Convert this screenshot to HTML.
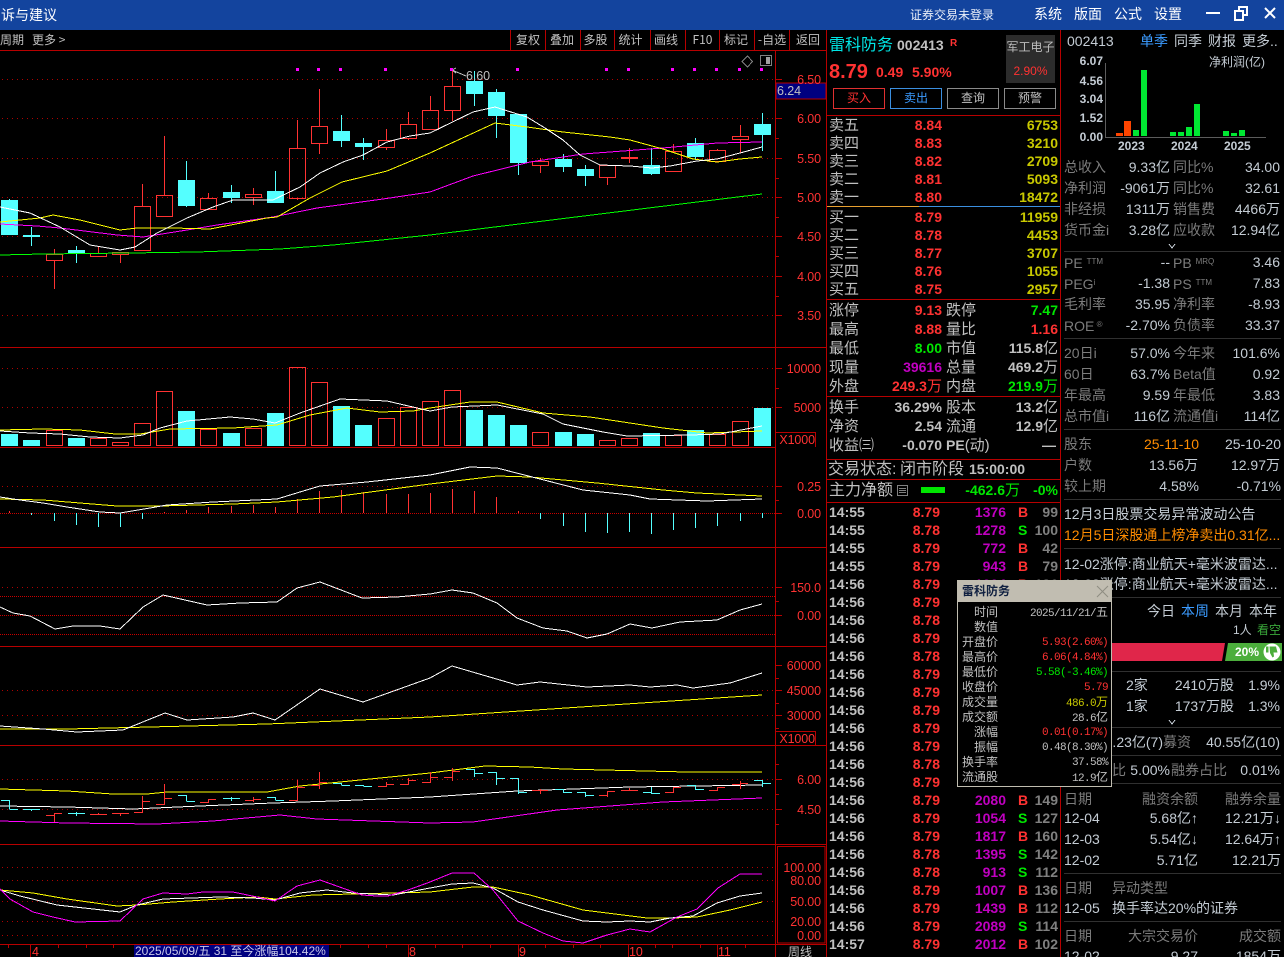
<!DOCTYPE html>
<html lang="zh"><head><meta charset="utf-8"><title>雷科防务</title>
<style>
html,body{margin:0;padding:0;background:#000;width:1284px;height:957px;overflow:hidden}
body{position:relative;font-family:"Liberation Sans","WenQuanYi Zen Hei","Noto Sans CJK SC",sans-serif;color:#c0c0c0}
.a,.r span{position:absolute;white-space:pre}
.a{height:18px;line-height:18px}
.r{position:absolute;left:0;width:1284px;height:18px;line-height:18px}
.g{color:#c0c0c0}.red{color:#ff3232}.gr{color:#00e600}.cy{color:#00e6e6}.yl{color:#c8c800}.mg{color:#c000c0}.bl{color:#3b9bff}.or{color:#ff8c00}.dk{color:#808080}
.m{font-family:"Liberation Sans","WenQuanYi Zen Hei","Noto Sans CJK SC",sans-serif;font-size:15px;color:#c0c0c0}
.r .m{top:1px}
.n{font-family:"Liberation Sans","WenQuanYi Zen Hei",sans-serif;font-weight:bold;font-size:14px}
.r .n{top:0}
.n s{text-decoration:none;font-weight:normal;font-size:15px}
.m1{left:829px}.m2{right:342px}.m3{left:946px}.m4{right:226px}
.t1{left:829px;color:#c0c0c0}.t2{right:344px;color:#ff3232}.t3{right:278px;color:#c000c0}.t4{left:1018px}.t5{right:226px;color:#808080}
.x{font-family:"Liberation Sans","Noto Sans CJK SC",sans-serif;font-size:14px;color:#c4ccd4}
.x .l,.l{color:#7c7c7c}
.c1{left:1064px}.c2{right:114px}.c3{left:1173px}.c4{right:4px}
.ax{font-family:"Liberation Sans","WenQuanYi Zen Hei",sans-serif;font-size:12.5px;letter-spacing:-.1px;color:#ff3232;position:absolute;right:463px;height:16px;line-height:16px;white-space:pre}
.tb{position:absolute;top:31px;height:17px;line-height:17px;font-size:12px;color:#c0c0c0;font-family:"WenQuanYi Zen Hei","Noto Sans CJK SC",sans-serif;white-space:pre;text-align:center}
.p{position:absolute;left:0;width:155px;height:15px;line-height:15px}
.p i{font-style:normal;position:absolute;right:115px;top:-1px;font-size:12px;color:#c0c0c0;font-family:"WenQuanYi Zen Hei","Noto Sans CJK SC",sans-serif}
.p b{font-weight:normal;position:absolute;right:5px;top:1px;font-family:"Liberation Mono","WenQuanYi Zen Hei",monospace;font-size:11px;letter-spacing:-.6px;white-space:pre}
.p b s{text-decoration:none;font-size:12px;letter-spacing:0}
</style></head><body>

<svg width="1284" height="957" style="position:absolute;left:0;top:0" shape-rendering="crispEdges" fill="none">
<rect x="0" y="0" width="1284" height="30" fill="#13449e"/>
<!-- frame lines -->
<path stroke="#b80000" d="M0 50.5H827M0 347.5H827M0 447.5H775M0 547.5H827M0 646.5H827M0 745.5H827M0 844.5H827M0 944.5H827M775.5 50V957M826.5 30V957M1060.5 30V957M510.5 30V50M545.5 30V50M580.5 30V50M614.5 30V50M650.5 30V50M685.5 30V50M719.5 30V50M754.5 30V50M789.5 30V50"/>
<path stroke="#b80000" d="M776 432.5H815.5V447M776 731.5H815.5V745M777.5 846.5H825V943H777.5Z"/>
<!-- dotted -->
<path stroke="#b00000" stroke-dasharray="1 4" d="M2 79.5H775M2 118.5H775M2 158.5H775M2 197.5H775M2 236.5H775M2 276.5H775M2 315.5H775M2 368.5H775M2 407.5H775M2 486.5H775M2 587.5H775M2 690.5H775M2 715.5H775M2 779.5H775M2 809.5H775M2 867.5H775M2 880.5H775M2 901.5H775M2 921.5H775M2 935.5H775"/>
<path stroke="#c80000" stroke-dasharray="1 1" d="M0 513.5H775M0 596.5H775M0 615.5H775M0 634.5H775"/>
<!-- ticks -->
<path stroke="#b80000" d="M776 79.5H782M776 118.5H782M776 158.5H782M776 197.5H782M776 236.5H782M776 276.5H782M776 315.5H782M776 138.5H779M776 178.5H779M776 217.5H779M776 256.5H779M776 296.5H779M776 368.5H782M776 407.5H782M776 388.5H779M776 486.5H782M776 513.5H782M776 500.5H779M776 587.5H782M776 615.5H782M776 601.5H779M776 665.5H782M776 690.5H782M776 715.5H782M776 678.5H779M776 703.5H779M776 728.5H779M776 779.5H782M776 809.5H782M776 794.5H779M776 824.5H779M776 764.5H779M8.5 945V948M58.5 945V948M86.5 945V948M113.5 945V948M30.5 945V957M134.5 945V957M340.5 945V948M368.5 945V948M386.5 945V948M408.5 945V957M435.5 945V948M462.5 945V948M490.5 945V948M518.5 945V957M545.5 945V948M573.5 945V948M600.5 945V948M628.5 945V957M655.5 945V948M672.5 945V948M700.5 945V948M717.5 945V957M745.5 945V948"/>
<!-- candles wicks -->
<path stroke="#ff3232" d="M54.5 249V254M54.5 260V289M98.5 246V253M120.5 255V263M142.5 184V206M164.5 136V195M208.5 193V198M253.5 188V194M253.5 197V205M297.5 120V148M297.5 198V200M319.5 89V126M319.5 143V154M386.5 129V140M386.5 147V150M408.5 112V124M408.5 138V140M430.5 96V110M452.5 68V86M452.5 110V121M540.5 158V161M540.5 165V173M607.5 177V185M629.5 148V163M673.5 144V151M717.5 149V150M740.5 125V136M740.5 139V153"/>
<path stroke="#54ffff" d="M9.5 199V235M31.5 227V246M76.5 246V263M186.5 161V207M231.5 185V203M275.5 171V203M341.5 115V147M363.5 138V160M474.5 71V106M496.5 89V138M518.5 114V175M563.5 154V172M585.5 165V186M651.5 148V175M695.5 138V159M762.5 113V151"/>
<!-- candle bodies -->
<g fill="#54ffff"><rect x="1" y="200" width="17" height="35"/><rect x="23" y="235" width="17" height="2"/><rect x="68" y="250" width="17" height="3"/><rect x="178" y="180" width="17" height="26"/><rect x="223" y="192" width="17" height="6"/><rect x="267" y="191" width="17" height="12"/><rect x="333" y="131" width="17" height="10"/><rect x="355" y="143" width="17" height="4"/><rect x="466" y="81" width="17" height="13"/><rect x="488" y="92" width="17" height="24"/><rect x="510" y="114" width="17" height="49"/><rect x="555" y="159" width="17" height="8"/><rect x="577" y="169" width="17" height="7"/><rect x="643" y="165" width="17" height="9"/><rect x="687" y="143" width="17" height="14"/><rect x="754" y="124" width="17" height="11"/></g>
<g stroke="#ff3232"><rect x="46.500" y="254.500" width="16" height="6"/><rect x="90.500" y="253.500" width="16" height="3"/><rect x="112.500" y="252.500" width="16" height="2"/><rect x="134.500" y="206.500" width="16" height="44"/><rect x="156.500" y="195.500" width="16" height="21"/><rect x="200.500" y="198.500" width="16" height="11"/><rect x="245.500" y="194.500" width="16" height="3"/><rect x="289.500" y="148.500" width="16" height="50"/><rect x="311.500" y="126.500" width="16" height="17"/><rect x="378.500" y="140.500" width="16" height="7"/><rect x="400.500" y="124.500" width="16" height="14"/><rect x="422.500" y="110.500" width="16" height="19"/><rect x="444.500" y="86.500" width="16" height="24"/><rect x="532.500" y="161.500" width="16" height="4"/><rect x="599.500" y="165.500" width="16" height="12"/><rect x="621.500" y="157.500" width="16" height="1"/><rect x="665.500" y="151.500" width="16" height="20"/><rect x="709.500" y="150.500" width="16" height="11"/><rect x="732.500" y="136.500" width="16" height="3"/></g>
<!-- main MAs -->
<polyline stroke="#00ff00" points="0,255 43,254 130,253 197,252 280,249 333,245 430,235 762,194"/>
<polyline stroke="#ff00ff" points="0,224 37,226 60,228 117,235 143,237 187,230 217,225 273,217 317,208 383,199 430,192 473,176 530,162 583,154 663,148 717,143 762,142"/>
<polyline stroke="#ffff00" points="0,222 40,218 53,215 80,220 120,230 137,228 173,228 210,229 267,218 277,217 310,198 342,182 387,171 430,153 495,123 527,127 563,132 610,137 630,140 663,149 693,159 717,162 740,159 762,157"/>
<polyline stroke="#ffffff" points="0,207 30,213 60,227 90,245 120,250 135,247 157,233 187,218 213,207 233,200 273,200 300,187 320,173 343,162 363,155 387,142 410,136 430,133 473,112 495,107 527,117 545,128 563,140 580,155 600,165 630,166 652,168 670,166 697,161 717,159 740,153 762,147"/>
<path stroke="#c0c0c0" d="M452 70L466 76M452 70L456 68M452 70L456 73"/>
<!-- magenta dots -->
<g fill="#ff00ff"><rect x="296" y="68" width="3" height="3"/><rect x="317" y="68" width="3" height="3"/><rect x="339" y="68" width="3" height="3"/><rect x="384" y="68" width="3" height="3"/><rect x="450" y="68" width="3" height="3"/><rect x="516" y="68" width="3" height="3"/><rect x="605" y="68" width="3" height="3"/><rect x="627" y="68" width="3" height="3"/><rect x="671" y="68" width="3" height="3"/><rect x="693" y="68" width="3" height="3"/><rect x="715" y="68" width="3" height="3"/><rect x="738" y="68" width="3" height="3"/><rect x="760" y="68" width="3" height="3"/></g>
<path stroke="#808080" d="M747.500 56L752.500 61.500L747.500 67L742 61.500Z"/>
<rect x="760.500" y="55.500" width="11" height="10" stroke="#808080"/><rect x="766" y="57" width="4" height="7" fill="#a0a0a0"/>
<!-- volume -->
<g fill="#54ffff"><rect x="1" y="434" width="17" height="12"/><rect x="23" y="440" width="17" height="6"/><rect x="68" y="438" width="17" height="8"/><rect x="178" y="411" width="17" height="35"/><rect x="223" y="433" width="17" height="13"/><rect x="267" y="413" width="17" height="33"/><rect x="333" y="406" width="17" height="40"/><rect x="355" y="425" width="17" height="21"/><rect x="466" y="410" width="17" height="36"/><rect x="488" y="415" width="17" height="31"/><rect x="510" y="425" width="17" height="21"/><rect x="555" y="432" width="17" height="14"/><rect x="577" y="434" width="17" height="12"/><rect x="643" y="433" width="17" height="13"/><rect x="687" y="430" width="17" height="16"/><rect x="754" y="408" width="17" height="38"/></g>
<g stroke="#ff3232"><rect x="46.500" y="430.500" width="16" height="15"/><rect x="90.500" y="438.500" width="16" height="7"/><rect x="112.500" y="442.500" width="16" height="3"/><rect x="134.500" y="423.500" width="16" height="22"/><rect x="156.500" y="391.500" width="16" height="54"/><rect x="200.500" y="429.500" width="16" height="16"/><rect x="245.500" y="428.500" width="16" height="17"/><rect x="289.500" y="367.500" width="16" height="78"/><rect x="311.500" y="382.500" width="16" height="63"/><rect x="378.500" y="418.500" width="16" height="27"/><rect x="400.500" y="407.500" width="16" height="38"/><rect x="422.500" y="401.500" width="16" height="44"/><rect x="444.500" y="390.500" width="16" height="55"/><rect x="532.500" y="432.500" width="16" height="13"/><rect x="599.500" y="440.500" width="16" height="5"/><rect x="621.500" y="438.500" width="16" height="7"/><rect x="665.500" y="435.500" width="16" height="10"/><rect x="709.500" y="434.500" width="16" height="11"/><rect x="732.500" y="421.500" width="16" height="24"/></g>
<polyline stroke="#ffff00" points="0,430 43,429 80,430 115,434 140,434 170,429 233,428 277,425 310,415 347,408 380,412 413,411 430,408 470,402 497,402 543,413 590,417 663,428 707,433 762,431"/>
<polyline stroke="#ffffff" points="0,431 30,433 60,434 90,437 120,438 143,435 160,428 187,421 230,417 253,419 275,423 300,413 340,399 387,401 430,411 452,407 497,405 543,414 563,424 603,432 627,436 690,435 720,434 762,426"/>
<!-- MACD -->
<path stroke="#ff3232" d="M9.500 511V513M164.500 512V513M186.500 510V513M208.500 507V513M231.500 506V513M253.500 505V513M275.500 507V513M297.500 499V513M319.500 491V513M341.500 490V513M363.500 492V513M386.500 494V513M408.500 494V513M430.500 493V513M452.500 489V513M474.500 491V513M496.500 497V513M518.500 511V513"/>
<path stroke="#54ffff" d="M31.500 513V515M54.500 513V521M76.500 513V525M98.500 513V527M120.500 513V527M142.500 513V519M540.500 513V519M563.500 513V526M585.500 513V532M607.500 513V533M629.500 513V532M651.500 513V534M673.500 513V530M695.500 513V528M717.500 513V526M740.500 513V521M762.500 513V518"/>
<polyline stroke="#ffff00" points="0,499 43,500 117,506 160,506 233,504 277,502 333,497 430,484 497,476 530,477 597,483 663,490 697,493 762,496"/>
<polyline stroke="#ffffff" points="0,497 20,500 43,503 67,507 100,512 120,513 150,508 167,505 213,502 277,499 300,492 320,486 367,482 430,475 470,467 497,468 540,479 583,490 630,495 650,499 707,501 762,499"/>
<!-- CCI -->
<polyline stroke="#ffffff" points="0,607 13,613 30,616 55,629 73,626 100,626 120,629 143,607 163,595 207,605 240,603 277,602 297,588 320,582 362,598 397,597 430,594 452,590 473,593 497,603 517,618 543,628 567,631 587,638 607,634 630,624 652,628 680,622 717,620 740,610 762,604"/>
<!-- OBV-like -->
<polyline stroke="#ffff00" points="0,729 67,729 150,727 267,724 430,717 762,695"/>
<polyline stroke="#ffffff" points="0,726 43,729 77,732 123,730 165,713 187,720 233,717 253,713 275,720 320,689 363,702 430,678 452,666 517,685 540,682 587,687 630,685 650,687 677,685 693,688 730,683 762,673"/>
<!-- BOLL + OHLC -->
<polyline stroke="#ffff00" points="0,789 67,791 113,794 147,794 167,792 267,792 300,786 430,773 485,766 530,767 563,769 687,772 762,772"/>
<polyline stroke="#ffffff" points="0,806 67,807 133,809 200,806 273,803 333,801 430,797 517,791 630,787 762,785"/>
<polyline stroke="#ff00ff" points="0,821 67,823 157,824 213,821 280,815 317,819 430,823 473,822 557,810 663,802 762,798"/>
<path stroke="#54ffff" d="M1 800.500H9.500V809M9.500 809.500H18M23 809.500H40M31.500 809V811M68 813.500H85M76.500 812V816M178 795.500H186.500V801M186.500 801.500H195M223 798.500H240M231.500 797V801M267 797.500H275.500V800M275.500 800.500H284M333 783.500H341.500V785M341.500 785.500H350M355 785.500H363.500V786M363.500 786.500H372M466 769.500H474.500V777M474.500 773.500H483M488 772.500H496.500V785M496.500 778.500H505M510 778.500H518.500V794M518.500 792.500H527M555 789.500H563.500V793M563.500 792.500H572M577 792.500H585.500V797M585.500 795.500H594M643 792.500H651.500V794M651.500 793.500H660M651.500 787V792M687 785.500H695.500V790M695.500 789.500H704M754 780.500H762.500V787M762.500 783.500H771"/>
<path stroke="#ff3232" d="M46 815.500H54.500V822M54.500 813.500H62M54.500 813V815M90 814.500H107M98.500 813V815M112 813.500H129M120.500 813V816M134 812.500H142.500V796M142.500 801.500H150M156 804.500H164.500V784M164.500 798.500H172M200 802.500H208.500V799M208.500 799.500H216M245 800.500H253.500V797M253.500 799.500H261M253.500 800V802M289 800.500H297.500V780M297.500 787.500H305M311 785.500H319.500V772M319.500 782.500H327M319.500 785V789M378 786.500H386.500V782M386.500 784.500H394M386.500 786V787M400 784.500H408.500V778M408.500 780.500H416M422 782.500H430.500V772M430.500 777.500H438M444 777.500H452.500V768M452.500 771.500H460M452.500 777V781M532 790.500H548M540.500 789V794M599 795.500H607.500V791M607.500 791.500H615M607.500 795V797M621 790.500H638M629.500 788V791M665 792.500H673.500V787M673.500 787.500H681M709 790.500H717.500V787M717.500 787.500H725M732 784.500H740.500V781M740.500 783.500H748M740.500 784V789"/>
<!-- KDJ -->
<polyline stroke="#ffff00" points="0,890 33,893 67,899 117,906 137,905 173,902 220,899 257,897 275,899 313,895 353,894 430,892 473,887 493,887 530,895 583,910 647,918 673,918 697,917 730,910 762,902"/>
<polyline stroke="#ffffff" points="0,890 20,896 57,905 93,909 120,912 137,905 163,899 220,897 253,898 275,900 300,893 327,890 353,893 393,895 430,888 452,884 473,883 493,888 518,902 543,910 583,921 607,922 630,921 650,922 670,918 693,916 717,903 740,896 762,893"/>
<polyline stroke="#ff00ff" points="0,889 10,899 33,912 53,917 75,922 120,921 143,899 163,893 187,894 203,892 233,892 257,897 275,901 297,886 320,880 362,895 377,896 388,896 408,890 430,882 452,873 474,873 493,890 518,921 543,933 563,941 583,943 607,935 630,929 650,932 677,917 697,909 718,888 740,874 762,874"/>
<!-- middle col lines -->
<path stroke="#b80000" d="M827 115.500H1060M827 299.500H1060M827 396.500H1060M827 459.500H1060M827 479.500H1060M827 502.500H1060"/>
<path stroke="#e8a030" d="M827 206.500H919"/><path stroke="#3b8fe0" d="M919 206.500H1060"/>
<rect x="1006" y="35" width="49" height="48" fill="#2c2c2c"/>
<rect x="833.500" y="88.500" width="51" height="20" stroke="#e03030"/><rect x="890.500" y="88.500" width="51" height="20" stroke="#3b8fe0"/><rect x="947.500" y="88.500" width="51" height="20" stroke="#8a8a8a"/><rect x="1004.500" y="88.500" width="51" height="20" stroke="#8a8a8a"/>
<rect x="921" y="487" width="24" height="6" fill="#00e600"/>
<rect x="897.500" y="485.500" width="10" height="10" stroke="#808080"/><path stroke="#808080" d="M899 488.500H906M899 490.500H906M899 492.500H906"/>
<!-- right col lines -->
<path stroke="#303030" d="M1064 251.500H1281M1064 338.500H1281M1064 429.500H1281M1064 499.500H1281M1064 548.500H1281M1064 597.500H1281M1064 671.500H1281M1064 727.500H1281M1064 755.500H1281M1064 783.500H1281M1064 873.500H1281M1064 921.500H1281"/>
<path stroke="#5c5c5c" d="M1105.500 63V137.500H1266"/>
<path stroke="#c4ccd4" d="M1169 244L1172 248L1175 244M1169 720L1172 724L1175 720"/>
<g fill="#ff4500"><rect x="1116" y="133" width="7" height="3"/><rect x="1124" y="121" width="7" height="15"/></g>
<g fill="#00e832"><rect x="1133" y="130" width="6" height="6"/><rect x="1141" y="70" width="6" height="66"/><rect x="1170" y="132" width="6" height="4"/><rect x="1178" y="132" width="6" height="4"/><rect x="1186" y="127" width="6" height="9"/><rect x="1194" y="104" width="6" height="32"/><rect x="1223" y="131" width="6" height="5"/><rect x="1231" y="133" width="6" height="3"/><rect x="1239" y="130" width="6" height="6"/></g>
<polygon shape-rendering="auto" fill="#e0264a" points="1112,643 1225,643 1222,661 1112,661"/>
<polygon shape-rendering="auto" fill="#4cae3c" points="1228,643 1282,643 1282,661 1225,661"/>
<circle shape-rendering="auto" cx="1272" cy="652" r="8.500" fill="#fff"/>
<path shape-rendering="auto" fill="#4cae3c" d="M1266 646.500h2.500v6h-2.500zM1269.500 646.500h6.500l1.500 6h-4l.5 4-1.500 1-2.500-4.500z"/>
<!-- window btns -->
<path stroke="#fff" stroke-width="2" d="M1206 13H1220"/>
<path stroke="#fff" stroke-width="2" d="M1235 11H1243V20H1235ZM1239 10V7H1247V15H1244"/>
<path shape-rendering="auto" stroke="#fff" stroke-width="2" d="M1265 8L1275 18M1275 8L1265 18"/>
<rect x="776" y="83" width="50" height="16" fill="#000080" stroke="#b80000"/>
<rect x="134" y="945" width="195" height="12" fill="#000080"/>
</svg>

<!-- top bar -->
<div class="a" style="left:1px;top:6px;font-size:14px;color:#fff">诉与建议</div>
<div class="a" style="left:910px;top:6px;font-size:12px;color:#e8eef8">证券交易未登录</div>
<div class="a" style="left:1034px;top:5px;font-size:14px;color:#fff">系统</div>
<div class="a" style="left:1074px;top:5px;font-size:14px;color:#fff">版面</div>
<div class="a" style="left:1114px;top:5px;font-size:14px;color:#fff">公式</div>
<div class="a" style="left:1154px;top:5px;font-size:14px;color:#fff">设置</div>

<!-- toolbar -->
<div class="tb" style="left:0">周期</div><div class="tb" style="left:32px">更多 &gt;</div>
<div class="tb" style="left:511px;width:34px">复权</div><div class="tb" style="left:545px;width:34px">叠加</div><div class="tb" style="left:579px;width:33px">多股</div><div class="tb" style="left:613px;width:35px">统计</div><div class="tb" style="left:649px;width:34px">画线</div><div class="tb" style="left:686px;width:33px">F10</div><div class="tb" style="left:719px;width:34px">标记</div><div class="tb" style="left:755px;width:34px">-自选</div><div class="tb" style="left:790px;width:36px">返回</div>

<!-- axis labels -->
<div class="ax" style="top:72px">6.50</div><div class="ax" style="top:111px">6.00</div><div class="ax" style="top:151px">5.50</div><div class="ax" style="top:190px">5.00</div><div class="ax" style="top:229px">4.50</div><div class="ax" style="top:269px">4.00</div><div class="ax" style="top:308px">3.50</div>
<div class="ax" style="top:361px">10000</div><div class="ax" style="top:400px">5000</div><div class="ax" style="top:479px">0.25</div><div class="ax" style="top:506px">0.00</div><div class="ax" style="top:580px">150.0</div><div class="ax" style="top:608px">0.00</div><div class="ax" style="top:658px">60000</div><div class="ax" style="top:683px">45000</div><div class="ax" style="top:708px">30000</div><div class="ax" style="top:772px">6.00</div><div class="ax" style="top:802px">4.50</div><div class="ax" style="top:860px">100.00</div><div class="ax" style="top:873px">80.00</div><div class="ax" style="top:894px">50.00</div><div class="ax" style="top:914px">20.00</div><div class="ax" style="top:928px">0.00</div>
<div class="ax" style="top:432px;right:469px">X1000</div><div class="ax" style="top:731px;right:469px">X1000</div>
<div class="ax" style="top:83px;left:777px;right:auto;color:#c0c0c0">6.24</div>
<div class="ax" style="top:68px;left:466px;right:auto;color:#c0c0c0">6.60</div>
<div class="ax" style="top:944px;left:32px;right:auto">4</div><div class="ax" style="top:944px;left:409px;right:auto">8</div><div class="ax" style="top:944px;left:519px;right:auto">9</div><div class="ax" style="top:944px;left:629px;right:auto">10</div><div class="ax" style="top:944px;left:718px;right:auto">11</div>
<div class="ax" style="top:943px;left:135px;right:auto;color:#c8c8e8;font-size:12px;letter-spacing:0">2025/05/09/五 31 至今涨幅104.42%</div>
<div class="tb" style="left:788px;top:943px;">周线</div>

<!-- quote header -->
<div class="a" style="left:829px;top:37px;font-size:16px;color:#00e6e6">雷科防务</div>
<div class="a n" style="left:897px;top:36px;color:#c0c0c0">002413</div>
<div class="a" style="left:950px;top:35px;font-size:10px;font-weight:bold;color:#ff3232">R</div>
<div class="a" style="left:1006px;top:38px;width:49px;text-align:center;font-size:12px;color:#bdbdbd">军工电子</div>
<div class="a" style="left:1006px;top:62px;width:49px;text-align:center;font-size:12px;color:#ff3232">2.90%</div>
<div class="a" style="left:829px;top:63px;font:bold 20px/18px 'Liberation Sans',sans-serif;color:#ff3232">8.79</div>
<div class="a n" style="left:876px;top:63px;color:#ff3232">0.49</div>
<div class="a n" style="left:912px;top:63px;color:#ff3232">5.90%</div>
<div class="a m" style="left:833px;top:89px;width:52px;text-align:center;font-size:12px;color:#ff3232">买入</div>
<div class="a m" style="left:890px;top:89px;width:52px;text-align:center;font-size:12px;color:#3b9bff">卖出</div>
<div class="a m" style="left:947px;top:89px;width:52px;text-align:center;font-size:12px">查询</div>
<div class="a m" style="left:1004px;top:89px;width:52px;text-align:center;font-size:12px">预警</div>

<!-- order book -->
<div class="r" style="top:116px"><span class="m m1">卖五</span><span class="n m2 red">8.84</span><span class="n m4 yl">6753</span></div>
<div class="r" style="top:134px"><span class="m m1">卖四</span><span class="n m2 red">8.83</span><span class="n m4 yl">3210</span></div>
<div class="r" style="top:152px"><span class="m m1">卖三</span><span class="n m2 red">8.82</span><span class="n m4 yl">2709</span></div>
<div class="r" style="top:170px"><span class="m m1">卖二</span><span class="n m2 red">8.81</span><span class="n m4 yl">5093</span></div>
<div class="r" style="top:188px"><span class="m m1">卖一</span><span class="n m2 red">8.80</span><span class="n m4 yl">18472</span></div>
<div class="r" style="top:208px"><span class="m m1">买一</span><span class="n m2 red">8.79</span><span class="n m4 yl">11959</span></div>
<div class="r" style="top:226px"><span class="m m1">买二</span><span class="n m2 red">8.78</span><span class="n m4 yl">4453</span></div>
<div class="r" style="top:244px"><span class="m m1">买三</span><span class="n m2 red">8.77</span><span class="n m4 yl">3707</span></div>
<div class="r" style="top:262px"><span class="m m1">买四</span><span class="n m2 red">8.76</span><span class="n m4 yl">1055</span></div>
<div class="r" style="top:280px"><span class="m m1">买五</span><span class="n m2 red">8.75</span><span class="n m4 yl">2957</span></div>

<div class="r" style="top:301px"><span class="m m1">涨停</span><span class="n m2 red">9.13</span><span class="m m3">跌停</span><span class="n m4 gr">7.47</span></div>
<div class="r" style="top:320px"><span class="m m1">最高</span><span class="n m2 red">8.88</span><span class="m m3">量比</span><span class="n m4 red">1.16</span></div>
<div class="r" style="top:339px"><span class="m m1">最低</span><span class="n m2 gr">8.00</span><span class="m m3">市值</span><span class="n m4 g">115.8<s>亿</s></span></div>
<div class="r" style="top:358px"><span class="m m1">现量</span><span class="n m2 mg">39616</span><span class="m m3">总量</span><span class="n m4 g">469.2<s>万</s></span></div>
<div class="r" style="top:377px"><span class="m m1">外盘</span><span class="n m2 red">249.3<s>万</s></span><span class="m m3">内盘</span><span class="n m4 gr">219.9<s>万</s></span></div>
<div class="r" style="top:398px"><span class="m m1">换手</span><span class="n m2 g">36.29%</span><span class="m m3">股本</span><span class="n m4 g">13.2<s>亿</s></span></div>
<div class="r" style="top:417px"><span class="m m1">净资</span><span class="n m2 g">2.54</span><span class="m m3">流通</span><span class="n m4 g">12.9<s>亿</s></span></div>
<div class="r" style="top:436px"><span class="m m1">收益㈢</span><span class="n m2 g">-0.070</span><span class="n m3 g">PE<s>(动)</s></span><span class="n m4 g" style="right:228px">—</span></div>
<div class="r" style="top:460px"><span class="m" style="left:828px;font-size:16px">交易状态:</span><span class="m" style="left:900px;font-size:16px">闭市阶段</span><span class="n g" style="left:969px">15:00:00</span></div>
<div class="r" style="top:481px"><span class="m m1" style="font-size:16px">主力净额</span><span class="n gr" style="right:264px">-462.6<s>万</s></span><span class="n m4 gr">-0%</span></div>

<!-- trades -->
<div class="r" style="top:503px"><span class="n t1">14:55</span><span class="n t2">8.79</span><span class="n t3">1376</span><span class="n t4 red">B</span><span class="n t5">99</span></div>
<div class="r" style="top:521px"><span class="n t1">14:55</span><span class="n t2">8.78</span><span class="n t3">1278</span><span class="n t4 gr">S</span><span class="n t5">100</span></div>
<div class="r" style="top:539px"><span class="n t1">14:55</span><span class="n t2">8.79</span><span class="n t3">772</span><span class="n t4 red">B</span><span class="n t5">42</span></div>
<div class="r" style="top:557px"><span class="n t1">14:55</span><span class="n t2">8.79</span><span class="n t3">943</span><span class="n t4 red">B</span><span class="n t5">79</span></div>
<div class="r" style="top:575px"><span class="n t1">14:56</span><span class="n t2">8.79</span><span class="n t3">1004</span><span class="n t4 red">B</span><span class="n t5">136</span></div>
<div class="r" style="top:593px"><span class="n t1">14:56</span><span class="n t2">8.79</span></div>
<div class="r" style="top:611px"><span class="n t1">14:56</span><span class="n t2">8.78</span></div>
<div class="r" style="top:629px"><span class="n t1">14:56</span><span class="n t2">8.79</span></div>
<div class="r" style="top:647px"><span class="n t1">14:56</span><span class="n t2">8.78</span></div>
<div class="r" style="top:665px"><span class="n t1">14:56</span><span class="n t2">8.79</span></div>
<div class="r" style="top:683px"><span class="n t1">14:56</span><span class="n t2">8.79</span></div>
<div class="r" style="top:701px"><span class="n t1">14:56</span><span class="n t2">8.79</span></div>
<div class="r" style="top:719px"><span class="n t1">14:56</span><span class="n t2">8.79</span></div>
<div class="r" style="top:737px"><span class="n t1">14:56</span><span class="n t2">8.79</span></div>
<div class="r" style="top:755px"><span class="n t1">14:56</span><span class="n t2">8.78</span></div>
<div class="r" style="top:773px"><span class="n t1">14:56</span><span class="n t2">8.79</span></div>
<div class="r" style="top:791px"><span class="n t1">14:56</span><span class="n t2">8.79</span><span class="n t3">2080</span><span class="n t4 red">B</span><span class="n t5">149</span></div>
<div class="r" style="top:809px"><span class="n t1">14:56</span><span class="n t2">8.79</span><span class="n t3">1054</span><span class="n t4 gr">S</span><span class="n t5">127</span></div>
<div class="r" style="top:827px"><span class="n t1">14:56</span><span class="n t2">8.79</span><span class="n t3">1817</span><span class="n t4 red">B</span><span class="n t5">160</span></div>
<div class="r" style="top:845px"><span class="n t1">14:56</span><span class="n t2">8.78</span><span class="n t3">1395</span><span class="n t4 gr">S</span><span class="n t5">142</span></div>
<div class="r" style="top:863px"><span class="n t1">14:56</span><span class="n t2">8.78</span><span class="n t3">913</span><span class="n t4 gr">S</span><span class="n t5">112</span></div>
<div class="r" style="top:881px"><span class="n t1">14:56</span><span class="n t2">8.79</span><span class="n t3">1007</span><span class="n t4 red">B</span><span class="n t5">136</span></div>
<div class="r" style="top:899px"><span class="n t1">14:56</span><span class="n t2">8.79</span><span class="n t3">1439</span><span class="n t4 red">B</span><span class="n t5">112</span></div>
<div class="r" style="top:917px"><span class="n t1">14:56</span><span class="n t2">8.79</span><span class="n t3">2089</span><span class="n t4 gr">S</span><span class="n t5">114</span></div>
<div class="r" style="top:935px"><span class="n t1">14:57</span><span class="n t2">8.79</span><span class="n t3">2012</span><span class="n t4 red">B</span><span class="n t5">102</span></div>

<!-- right column -->
<div class="a x" style="left:1067px;top:32px;font-size:14px">002413</div>
<div class="a x bl" style="left:1140px;top:32px;color:#3b9bff">单季</div><div class="a x" style="left:1174px;top:32px">同季</div><div class="a x" style="left:1208px;top:32px">财报</div><div class="a x" style="left:1242px;top:32px">更多..</div>
<div class="a x" style="right:19px;top:53px;font-size:12px">净利润(亿)</div>
<div class="a x" style="right:181px;top:52px;font-size:12px;font-weight:bold">6.07</div>
<div class="a x" style="right:181px;top:72px;font-size:12px;font-weight:bold">4.56</div>
<div class="a x" style="right:181px;top:90px;font-size:12px;font-weight:bold">3.04</div>
<div class="a x" style="right:181px;top:109px;font-size:12px;font-weight:bold">1.52</div>
<div class="a x" style="right:181px;top:128px;font-size:12px;font-weight:bold">0.00</div>
<div class="a x" style="left:1118px;top:137px;font-size:12px;font-weight:bold">2023</div>
<div class="a x" style="left:1171px;top:137px;font-size:12px;font-weight:bold">2024</div>
<div class="a x" style="left:1224px;top:137px;font-size:12px;font-weight:bold">2025</div>

<div class="r x" style="top:158px"><span class="c1 l">总收入</span><span class="c2">9.33亿</span><span class="c3 l">同比%</span><span class="c4">34.00</span></div>
<div class="r x" style="top:179px"><span class="c1 l">净利润</span><span class="c2">-9061万</span><span class="c3 l">同比%</span><span class="c4">32.61</span></div>
<div class="r x" style="top:200px"><span class="c1 l">非经损</span><span class="c2">1311万</span><span class="c3 l">销售费</span><span class="c4">4466万</span></div>
<div class="r x" style="top:221px"><span class="c1 l">货币金i</span><span class="c2">3.28亿</span><span class="c3 l">应收款</span><span class="c4">12.94亿</span></div>
<div class="r x" style="top:253px"><span class="c1 l">PE <small style="font-size:8px;vertical-align:4px">TTM</small></span><span class="c2">--</span><span class="c3 l">PB <small style="font-size:8px;vertical-align:4px">MRQ</small></span><span class="c4">3.46</span></div>
<div class="r x" style="top:274px"><span class="c1 l">PEG<small style="font-size:8px;vertical-align:4px">i</small></span><span class="c2">-1.38</span><span class="c3 l">PS <small style="font-size:8px;vertical-align:4px">TTM</small></span><span class="c4">7.83</span></div>
<div class="r x" style="top:295px"><span class="c1 l">毛利率</span><span class="c2">35.95</span><span class="c3 l">净利率</span><span class="c4">-8.93</span></div>
<div class="r x" style="top:316px"><span class="c1 l">ROE<small style="font-size:8px;vertical-align:4px"> ®</small></span><span class="c2">-2.70%</span><span class="c3 l">负债率</span><span class="c4">33.37</span></div>
<div class="r x" style="top:344px"><span class="c1 l">20日i</span><span class="c2">57.0%</span><span class="c3 l">今年来</span><span class="c4">101.6%</span></div>
<div class="r x" style="top:365px"><span class="c1 l">60日</span><span class="c2">63.7%</span><span class="c3 l">Beta值</span><span class="c4">0.92</span></div>
<div class="r x" style="top:386px"><span class="c1 l">年最高</span><span class="c2">9.59</span><span class="c3 l">年最低</span><span class="c4">3.83</span></div>
<div class="r x" style="top:407px"><span class="c1 l">总市值i</span><span class="c2">116亿</span><span class="c3 l">流通值i</span><span class="c4">114亿</span></div>
<div class="r x" style="top:435px"><span class="c1 l">股东</span><span class="or" style="right:85px">25-11-10</span><span class="c4" style="right:3px">25-10-20</span></div>
<div class="r x" style="top:456px"><span class="c1 l">户数</span><span style="right:86px">13.56万</span><span class="c4">12.97万</span></div>
<div class="r x" style="top:477px"><span class="c1 l">较上期</span><span style="right:85px">4.58%</span><span class="c4" style="right:3px">-0.71%</span></div>
<div class="r x" style="top:505px"><span class="c1">12月3日股票交易异常波动公告</span></div>
<div class="r x" style="top:526px"><span class="c1 or">12月5日深股通上榜净卖出0.31亿...</span></div>
<div class="r x" style="top:555px"><span class="c1">12-02涨停:商业航天+毫米波雷达...</span></div>
<div class="r x" style="top:575px"><span class="c1">12-02涨停:商业航天+毫米波雷达...</span></div>
<div class="r x" style="top:602px"><span style="left:1147px">今日</span><span style="left:1181px;color:#3b9bff">本周</span><span style="left:1215px">本月</span><span style="left:1249px">本年</span></div>
<div class="r x" style="top:621px;font-size:12px"><span style="left:1233px">1人</span><span style="left:1257px;color:#3aa83a">看空</span></div>
<div class="a" style="left:1235px;top:643px;font-size:12px;font-weight:bold;color:#fff">20%</div>
<div class="r x" style="top:676px"><span style="left:1126px">2家</span><span style="right:50px">2410万股</span><span class="c4">1.9%</span></div>
<div class="r x" style="top:697px"><span style="left:1126px">1家</span><span style="right:50px">1737万股</span><span class="c4">1.3%</span></div>
<div class="r x" style="top:733px"><span style="right:121px">1.23亿(7)</span><span class="l" style="left:1163px">募资</span><span class="c4">40.55亿(10)</span></div>
<div class="r x" style="top:761px"><span class="l" style="left:1112px">比</span><span class="c2">5.00%</span><span class="l" style="left:1171px">融券占比</span><span class="c4">0.01%</span></div>
<div class="r x" style="top:790px"><span class="c1 l">日期</span><span class="l" style="right:86px">融资余额</span><span class="l" style="right:3px">融券余量</span></div>
<div class="r x" style="top:809px"><span class="c1">12-04</span><span style="right:86px">5.68亿↑</span><span style="right:3px">12.21万↓</span></div>
<div class="r x" style="top:830px"><span class="c1">12-03</span><span style="right:86px">5.54亿↓</span><span style="right:3px">12.64万↑</span></div>
<div class="r x" style="top:851px"><span class="c1">12-02</span><span style="right:86px">5.71亿</span><span style="right:3px">12.21万</span></div>
<div class="r x" style="top:879px"><span class="c1 l">日期</span><span class="l" style="left:1112px">异动类型</span></div>
<div class="r x" style="top:899px"><span class="c1">12-05</span><span style="left:1112px">换手率达20%的证券</span></div>
<div class="r x" style="top:927px"><span class="c1 l">日期</span><span class="l" style="right:86px">大宗交易价</span><span class="l" style="right:3px">成交额</span></div>
<div class="r x" style="top:947px"><span class="c1">12-02</span><span style="right:86px">9.27</span><span style="right:3px">1854万</span></div>

<!-- popup -->
<div style="position:absolute;left:957px;top:580px;width:155px;height:207px;background:#000;border:1px solid #c0bdb0;box-sizing:border-box">
<div style="position:absolute;left:0;top:0;width:153px;height:21px;background:#c1bdb1;color:#102040;font:bold 12px/20px 'WenQuanYi Zen Hei','Noto Sans CJK SC',sans-serif;text-indent:4px">雷科防务</div>
<svg width="14" height="14" style="position:absolute;left:138px;top:4px"><path d="M1 1L12 12M12 1L1 12" stroke="#8e8c82" fill="none"/></svg>
<div class="p" style="top:24px"><i>时间</i><b class="g">2025/11/21/<s>五</s></b></div>
<div class="p" style="top:39px"><i>数值</i></div>
<div class="p" style="top:54px"><i>开盘价</i><b class="red">5.93(2.60%)</b></div>
<div class="p" style="top:69px"><i>最高价</i><b class="red">6.06(4.84%)</b></div>
<div class="p" style="top:84px"><i>最低价</i><b class="gr">5.58(-3.46%)</b></div>
<div class="p" style="top:99px"><i>收盘价</i><b class="red">5.79</b></div>
<div class="p" style="top:114px"><i>成交量</i><b class="yl">486.0<s>万</s></b></div>
<div class="p" style="top:129px"><i>成交额</i><b class="g">28.6<s>亿</s></b></div>
<div class="p" style="top:144px"><i>涨幅</i><b class="red">0.01(0.17%)</b></div>
<div class="p" style="top:159px"><i>振幅</i><b class="g">0.48(8.30%)</b></div>
<div class="p" style="top:174px"><i>换手率</i><b class="g">37.58%</b></div>
<div class="p" style="top:189px"><i>流通股</i><b class="g">12.9<s>亿</s></b></div>
</div>
</body></html>
